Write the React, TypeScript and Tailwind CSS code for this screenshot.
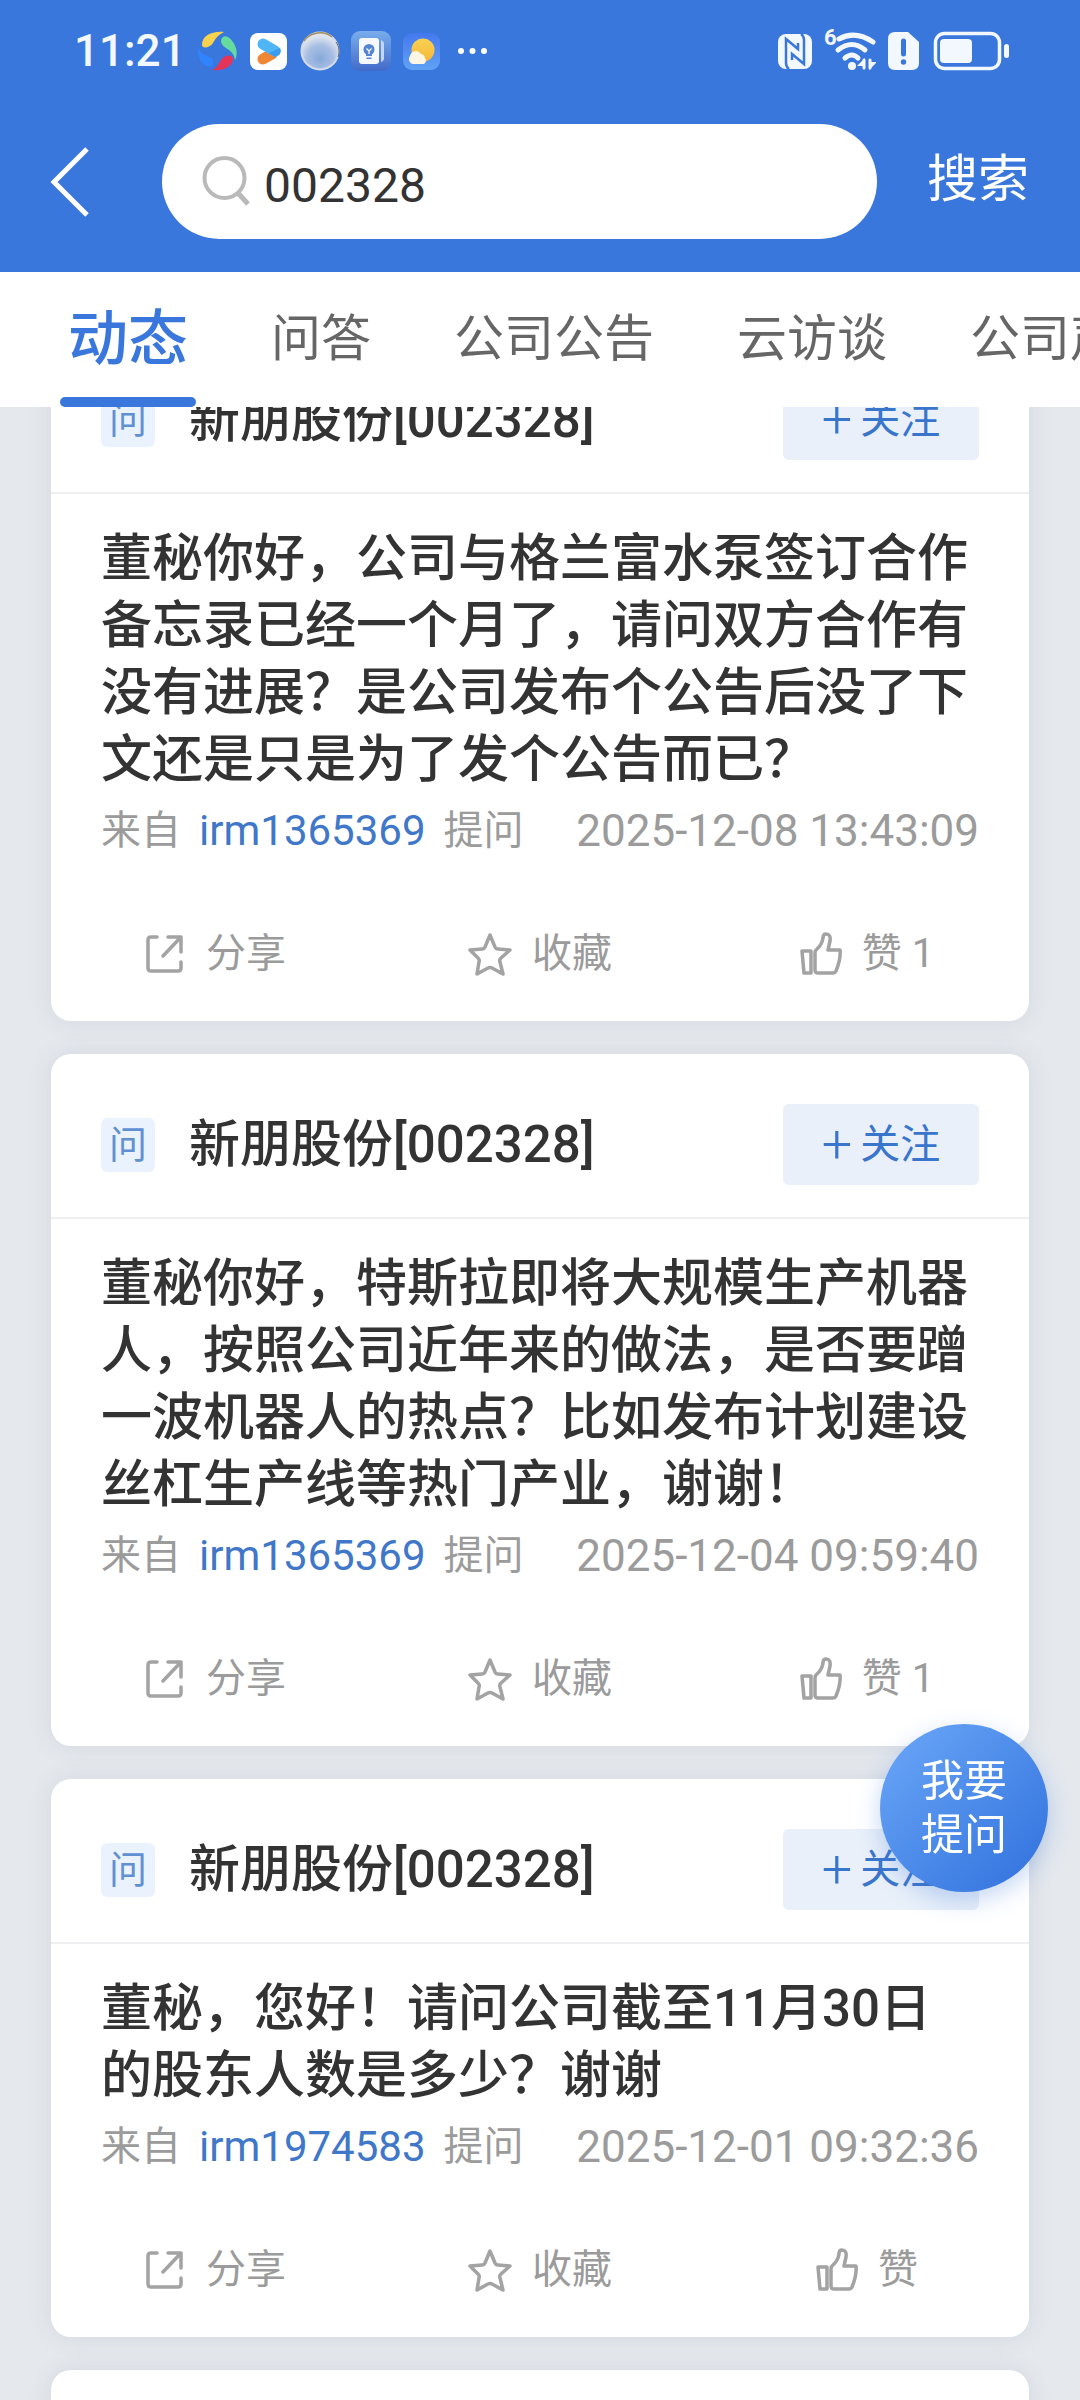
import { useState, type ReactNode } from "react";

const tabs = ["动态", "问答", "公司公告", "云访谈", "公司声音"];

const questions = [
    {
        id: 1,
        company: "新朋股份[002328]",
        content: "董秘你好，公司与格兰富水泵签订合作备忘录已经一个月了，请问双方合作有没有进展？是公司发布个公告后没了下文还是只是为了发个公告而已？",
        user: "irm1365369",
        time: "2025-12-08 13:43:09",
        likes: 1,
    },
    {
        id: 2,
        company: "新朋股份[002328]",
        content: "董秘你好，特斯拉即将大规模生产机器人，按照公司近年来的做法，是否要蹭一波机器人的热点？比如发布计划建设丝杠生产线等热门产业，谢谢！",
        user: "irm1365369",
        time: "2025-12-04 09:59:40",
        likes: 1,
    },
    {
        id: 3,
        company: "新朋股份[002328]",
        content: "董秘，您好！请问公司截至11月30日的股东人数是多少？谢谢",
        user: "irm1974583",
        time: "2025-12-01 09:32:36",
        likes: 0,
    },
];

function StatusBar() {
    return (
        <div className="flex h-[102px] items-center justify-between pl-[74px] pr-[71px] text-[#f3f8ff]">
            <div className="flex items-center gap-[11px]">
                <span className="w-[113px] text-[44px] leading-none font-medium">11:21</span>
                <svg className="size-10" viewBox="0 0 40 40">
                    <path d="M4 14C4 5 13 0 26 1C20 4 18 7 15 12C12 17 4 18 4 14Z" fill="#f6d24f" />
                    <path d="M24 7C27 3 32 6 35 11C39 17 40 23 37 29C36 23 33 20 28 17C23 14 22 10 24 7Z" fill="#66dba0" />
                    <path d="M1 15C1 21 4 23 9 25C15 27 17 31 14 35C9 38 0 30 0 21C0 18 0 17 1 15Z" fill="#3184ff" />
                    <path d="M14 39C19 37 20 34 23 29C26 24 33 23 35 27C36 33 27 41 14 39Z" fill="#e63459" />
                </svg>
                <svg className="size-10" viewBox="0 0 40 40">
                    <rect x="1" y="2" width="37" height="37" rx="8" fill="#fff" />
                    <path d="M14 28L23 23" stroke="#f08734" strokeWidth="11" strokeLinecap="round" />
                    <path d="M14 13L26 20" stroke="#50b5f5" strokeWidth="11" strokeLinecap="round" />
                    <path d="M20 22L31 17A5.500 5.500 0 0 1 29 24.500L26 26Z" fill="#3b9bee" />
                </svg>
                <svg className="size-10" viewBox="0 0 40 40">
                    <defs>
                        <radialGradient id="orb" cx="0.5" cy="0.7" r="0.6">
                            <stop offset="0" stopColor="#86a8dc" />
                            <stop offset="0.6" stopColor="#a9bfe2" />
                            <stop offset="1" stopColor="#dfe5ee" />
                        </radialGradient>
                    </defs>
                    <circle cx="20" cy="20" r="18.500" fill="url(#orb)" stroke="#d3dbe8" strokeWidth="2" />
                    <path d="M4 10C10 1 24 -1 32 6" stroke="#a58f5c" strokeWidth="1.500" fill="none" />
                    <path d="M36 11C39 15 40 21 38 26" stroke="#5b6270" strokeWidth="1" fill="none" />
                </svg>
                <svg className="size-10" viewBox="0 0 40 40">
                    <defs>
                        <linearGradient id="tips" x1="0" y1="0" x2="0" y2="1">
                            <stop offset="0" stopColor="#79adec" />
                            <stop offset="1" stopColor="#426bc9" />
                        </linearGradient>
                    </defs>
                    <rect width="40" height="40" rx="9" fill="url(#tips)" />
                    <rect x="8" y="7" width="20" height="26" rx="3" fill="#f5f8ff" />
                    <path d="M30 9Q33 10 33 13V27Q33 30 30 31Z" fill="#c3d6f5" />
                    <circle cx="18" cy="18.500" r="5.500" fill="#5584d2" />
                    <path d="M15 22H21V25H15ZM15.500 26.500H20.500V28H15.500Z" fill="#5584d2" />
                    <path d="M15.500 17.500L18 20L20.500 17.500M18 20V23" stroke="#f5f8ff" strokeWidth="1.300" fill="none" />
                </svg>
                <svg className="size-10" viewBox="0 0 40 40">
                    <defs>
                        <linearGradient id="sky" x1="0" y1="0" x2="0" y2="1">
                            <stop offset="0" stopColor="#4478ee" />
                            <stop offset="1" stopColor="#62a2f5" />
                        </linearGradient>
                        <linearGradient id="sun" x1="0" y1="0" x2="0" y2="1">
                            <stop offset="0" stopColor="#f9d154" />
                            <stop offset="1" stopColor="#f5b838" />
                        </linearGradient>
                    </defs>
                    <rect x="1" y="2" width="37" height="37" rx="9" fill="url(#sky)" />
                    <circle cx="21" cy="19" r="11.500" fill="url(#sun)" />
                    <path d="M11 33A5 5 0 0 1 8 25A6 6 0 0 1 19 23A5 5 0 0 1 23 27A4 4 0 0 1 22 33Z" fill="#fdf6e4" />
                </svg>
                <svg className="h-10 w-9" viewBox="0 0 36 40" fill="#fff">
                    <circle cx="8" cy="20" r="3" />
                    <circle cx="19.500" cy="20" r="3" />
                    <circle cx="31" cy="20" r="3" />
                </svg>
            </div>

            <div className="flex items-center gap-3">
                <svg className="h-10 w-[34px]" viewBox="0 0 34 40">
                    <rect x="0" y="3" width="34" height="35" rx="8" fill="#f3f8ff" />
                    <path
                        d="M11 38Q8 36 8 32V8L20 18V12M23 3Q26 5 26 9V33L14 23V29"
                        stroke="#3a77dc"
                        strokeWidth="2.500"
                        fill="none"
                    />
                </svg>
                <div className="relative">
                    <span className="absolute -top-1 left-0 text-[22px] leading-none font-bold">6</span>
                    <svg className="h-10 w-[52px]" viewBox="0 0 52 40" fill="none" stroke="#f3f8ff" strokeWidth="5" strokeLinecap="round">
                        <path d="M15 8Q31 -1 49 11" />
                        <path d="M14 19Q28 8 41 19" />
                        <path d="M21 27Q28 21 34 27" />
                        <circle cx="28" cy="35" r="4" fill="#f3f8ff" stroke="none" />
                        <path d="M40 29V37M46 29V37" strokeWidth="3" />
                        <path d="M41 27L33 35H41ZM45 39L53 31H45Z" fill="#f3f8ff" stroke="none" />
                    </svg>
                </div>
                <svg className="h-10 w-8" viewBox="0 0 32 40">
                    <path d="M7 1H20L31 11V32Q31 39 24 39H7Q0 39 0 32V8Q0 1 7 1Z" fill="#f3f8ff" />
                    <path d="M15.500 10V23" stroke="#3a77dc" strokeWidth="5" strokeLinecap="round" />
                    <circle cx="15.500" cy="31" r="2.700" fill="#3a77dc" />
                </svg>
                <svg className="h-10 w-[77px]" viewBox="0 0 77 40">
                    <rect x="3.500" y="2.500" width="64" height="35" rx="9" fill="none" stroke="#f3f8ff" strokeWidth="3.500" />
                    <rect x="8" y="8" width="32" height="24" rx="4" fill="#f3f8ff" />
                    <rect x="72" y="13" width="5" height="14" rx="2.500" fill="#f3f8ff" />
                </svg>
            </div>
        </div>
    );
}

function SearchBar() {
    return (
        <form className="flex items-center pt-[22px] pr-[51px] pb-[33px] pl-[50px]" onSubmit={(e) => e.preventDefault()}>
            <button type="button" aria-label="返回" className="mr-[72px]">
                <svg className="h-[70px] w-10" viewBox="0 0 40 70" fill="none" stroke="#fff" strokeWidth="5">
                    <path d="M37 2L4 35L37 68" />
                </svg>
            </button>
            <label className="flex h-[115px] min-w-0 flex-1 items-center rounded-full bg-white pl-[38px]">
                <svg className="h-[52px] w-[52px] shrink-0" viewBox="0 0 52 52" fill="none" stroke="#b9b9b9" strokeWidth="4">
                    <circle cx="24.500" cy="22" r="20" />
                    <path d="M38 37L48 48" strokeWidth="5" />
                </svg>
                <input
                    aria-label="搜索内容"
                    defaultValue="002328"
                    className="ml-3 min-w-0 flex-1 bg-transparent pt-2 text-[48px] text-[#333] outline-none"
                />
            </label>
            <button type="submit" className="ml-[50px] pb-1 text-[51px] leading-[60px] text-white">
                搜索
            </button>
        </form>
    );
}

function Action({ label, children }: { label: string; children: ReactNode }) {
    return (
        <button type="button" className="flex items-center justify-center gap-5">
            <svg
                className="size-11"
                viewBox="0 0 44 44"
                fill="none"
                stroke="#a3a3a3"
                strokeWidth="3.500"
                strokeLinecap="round"
                strokeLinejoin="round"
            >
                {children}
            </svg>
            {label}
        </button>
    );
}

function QuestionCard({ question }: { question: (typeof questions)[number] }) {
    return (
        <article className="rounded-[20px] bg-white shadow-[0_0_24px_rgba(60,70,90,0.1)]">
            <header className="flex items-center border-b-2 border-[#eeeff1] pt-[50px] pr-[50px] pb-8 pl-[50px]">
                <span className="flex size-[54px] items-center justify-center rounded-md bg-[#eaf3fd] text-[38px] leading-none text-[#6190d2]">
                    问
                </span>
                <h2 className="ml-[34px] flex-1 text-[51px] leading-[60px] font-medium">{question.company}</h2>
                <button
                    type="button"
                    className="flex h-[81px] w-[196px] items-center justify-center gap-2 rounded-md bg-[#e9f0f9] text-[40px] text-[#3a75cc]"
                >
                    <span className="text-[54px] leading-none font-light">+</span>
                    关注
                </button>
            </header>

            <p className="px-[50px] pt-[31px] text-[51px] leading-[67px] font-medium">{question.content}</p>

            <div className="mt-2 flex items-center justify-between px-[50px] text-[40px] leading-[60px] text-[#9b9b9b]">
                <div className="flex items-center gap-[18px]">
                    来自
                    <a href={`#${question.user}`} className="text-[42px] text-[#3f77c9]">{question.user}</a>
                    提问
                </div>
                <time className="text-[44px]">{question.time}</time>
            </div>

            <footer className="grid grid-cols-3 pt-[63px] pb-[37px] text-[40px] leading-[60px] text-[#9b9b9b]">
                <Action label="分享">
                    <path d="M15 5H9Q6 5 6 8V36Q6 39 9 39H36Q39 39 39 36V30M26 5H39V20M39 5L21 24" />
                </Action>
                <Action label="收藏">
                    <path d="M22 3L27 15Q28 17 30 17L42 18L33 26Q31 28 32 30L35 42L24 36Q22 35 20 36L9 42L11 30Q12 28 10 26L2 18L14 17Q16 17 17 15Z" />
                </Action>
                <Action label={question.likes > 0 ? `赞 ${question.likes}` : "赞"}>
                    <path d="M4 19H13V41H6ZM18 18Q24 13 25 6Q25 2 28 2Q33 2 32 9L30 18H42Q43 27 38 39Q37 41 35 41H20Q17 41 17 38V21Q17 19 18 18Z" />
                </Action>
            </footer>
        </article>
    );
}

export default function App() {
    const [activeTab, setActiveTab] = useState(tabs[0]);

    return (
        <div className="flex h-screen flex-col overflow-hidden bg-[#e5e9ee] font-[Roboto,'Noto_Sans_CJK_SC',sans-serif] text-[#333]">
            <div className="shrink-0 bg-[#3a77dc]">
                <StatusBar />
                <SearchBar />
            </div>

            <nav className="relative z-10 flex h-[135px] shrink-0 gap-[83px] overflow-hidden bg-white pl-[68px] text-[50px] whitespace-nowrap text-[#666]">
                {tabs.map((tab) => (
                    <button
                        key={tab}
                        type="button"
                        onClick={() => setActiveTab(tab)}
                        className={
                            tab === activeTab
                                ? "relative shrink-0 text-[60px] leading-none font-medium text-[#3a77dc]"
                                : "shrink-0 pb-px leading-none"
                        }
                    >
                        {tab}
                        {tab === activeTab && (
                            <span className="absolute -inset-x-2 bottom-0 h-[10px] rounded-full bg-[#3a77dc]" />
                        )}
                    </button>
                ))}
            </nav>

            <main className="min-h-0 flex-1 overflow-hidden">
                {/* feed is scrolled a little, the first card slides under the tabs */}
                <div className="-mt-[78px] flex flex-col gap-[33px] px-[51px]">
                    {questions.map((question) => (
                        <QuestionCard key={question.id} question={question} />
                    ))}
                    <article className="h-[200px] rounded-[20px] bg-white shadow-[0_0_24px_rgba(60,70,90,0.1)]" />
                </div>
            </main>

            <button
                type="button"
                className="fixed right-8 bottom-[508px] z-20 size-[168px] rounded-full bg-linear-to-br from-[#6ba7f8] to-[#3070dc] px-10 text-[43px] leading-[54px] text-white shadow-[0_8px_24px_rgba(58,119,220,0.3)]"
            >
                我要提问
            </button>
        </div>
    );
}
